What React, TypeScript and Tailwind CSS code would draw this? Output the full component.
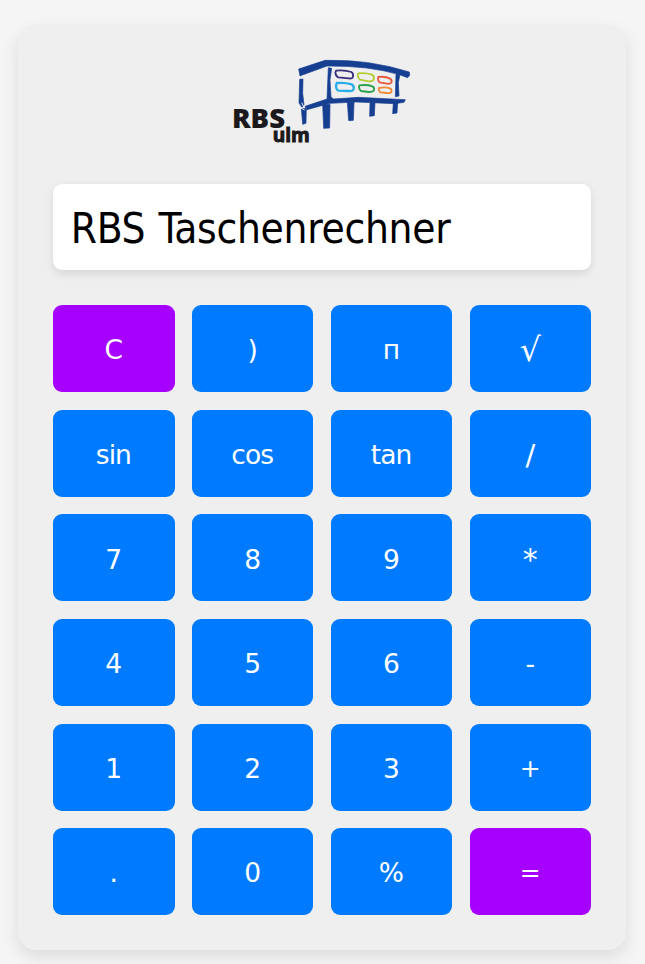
type Key = { label: string; accent?: boolean; size?: string };

const keys: Key[] = [
  { label: "C", accent: true }, { label: ")" }, { label: "п" }, { label: "√", size: "text-[33px]" },
  { label: "sin" }, { label: "cos" }, { label: "tan" }, { label: "/", size: "text-[29px]" },
  { label: "7" }, { label: "8" }, { label: "9" }, { label: "*", size: "text-[30px]" },
  { label: "4" }, { label: "5" }, { label: "6" }, { label: "-" },
  { label: "1" }, { label: "2" }, { label: "3" }, { label: "+", size: "text-[25px]" },
  { label: "." }, { label: "0" }, { label: "%" }, { label: "=", accent: true, size: "text-[25px]" },
];

function Logo() {
  return (
    <svg viewBox="0 0 585 300" className="h-[100px] w-[195px]" aria-label="RBS ulm">
      <g fill="#163f91" stroke="#163f91" strokeWidth="2" strokeLinejoin="round">
        <path d="M221 57 L300 31 Q430 27 553 66 L554 76 L548 83 L520 73 Q430 47 306 48 L232 75 L225 78 Z" />
        <path d="M224 88 L234 87 L233 130 L237 164 L231 172 L222 159 Z" />
        <path d="M310 53 L320 55 L315 90 L318 140 L325 147 L400 142 L541 149 L537 157 L510 161 L395 156 L315 160 L246 179 L240 169 L306 147 Z" />
        <path d="M513 72 L525 73 L520 98 L522 138 L511 140 Z" />
        <path d="M229 176 L244 175 L243 220 L233 223 Z" />
        <path d="M293 164 L315 163 L314 234 L296 235 Z" />
        <path d="M367 157 L387 157 L385 211 L371 212 Z" />
        <path d="M435 158 L450 158 L448 197 L434 199 Z" />
        <path d="M505 158 L518 158 L516 189 L503 191 Z" />
      </g>
      <path d="M230 158 L236 170 M228 174 L239 180" stroke="#efefef" strokeWidth="3" />
      <g fill="none" strokeWidth="5.5" strokeLinejoin="round">
        <path d="M333 62 Q358 59 379 66 Q386 70 384 80 Q383 87 371 85 L340 82 Q333 80 331 68 Z" stroke="#3a2f7c" />
        <path d="M400 70 Q424 68 441 74 Q449 78 446 88 Q444 95 431 94 L405 89 Q400 85 398 76 Z" stroke="#b5cb32" />
        <path d="M460 81 Q481 78 495 86 Q502 90 499 98 Q497 102 485 101 L464 97 Q459 91 459 86 Z" stroke="#e65b3d" />
        <path d="M335 99 Q361 97 380 103 Q388 108 386 117 Q384 124 371 123 L341 122 Q335 121 333 109 Z" stroke="#27aeea" strokeWidth="7" />
        <path d="M403 106 Q427 103 442 109 Q449 112 447 120 Q445 126 431 126 L408 123 Q403 119 402 112 Z" stroke="#2ba04a" />
        <path d="M462 114 Q482 110 495 115 Q501 118 499 126 Q498 130 485 129 L466 127 Q461 122 461 118 Z" stroke="#ef8a39" />
      </g>
      <g fill="#1b191b" stroke="#1b191b" fontFamily="'Open Sans', 'Noto Sans', sans-serif">
        <text x="21" y="233" fontSize="80" fontWeight="800" strokeWidth="0.5" textLength="159" lengthAdjust="spacingAndGlyphs">RBS</text>
        <text x="143" y="275" fontSize="58" fontWeight="700" strokeWidth="3" textLength="111" lengthAdjust="spacingAndGlyphs">ulm</text>
      </g>
    </svg>
  );
}

export default function App() {
  return (
    <div className="h-[964px] w-full overflow-hidden bg-[#f5f5f5] px-[18px] pt-[25px]">
      <main className="flex h-[925px] w-[608px] flex-col rounded-[18px] bg-[#efefef] pl-[35.2px] pr-[35px] pt-[25px] shadow-[0_7px_17px_rgba(0,0,0,0.1)]">
        <div className="flex justify-center">
          <Logo />
        </div>
        <div className="mt-[34px] flex h-[86px] shrink-0 items-center rounded-[9px] bg-white pl-[17.5px] pt-[2px] font-['DejaVu_Sans_Condensed','DejaVu_Sans',sans-serif] text-[42px] tracking-[-0.3px] text-black shadow-[0_3.5px_9px_rgba(0,0,0,0.1)] [font-stretch:condensed] [word-spacing:1.5px]">
          <span className="whitespace-nowrap">RBS Taschenrechner</span>
        </div>
        <div className="mt-[35.2px] grid h-[610px] shrink-0 grid-cols-4 grid-rows-6 gap-[17.5px] font-['DejaVu_Sans',sans-serif]">
          {keys.map((key) => (
            <button
              key={key.label}
              className={`flex min-h-0 items-center justify-center rounded-[9px] pt-[3.5px] pr-[1px] leading-[40px] tracking-[-0.9px] text-white ${key.size ?? "text-[26.5px]"} ${key.accent ? "bg-[#a600ff]" : "bg-[#007bff]"}`}
            >
              {key.label}
            </button>
          ))}
        </div>
      </main>
    </div>
  );
}
